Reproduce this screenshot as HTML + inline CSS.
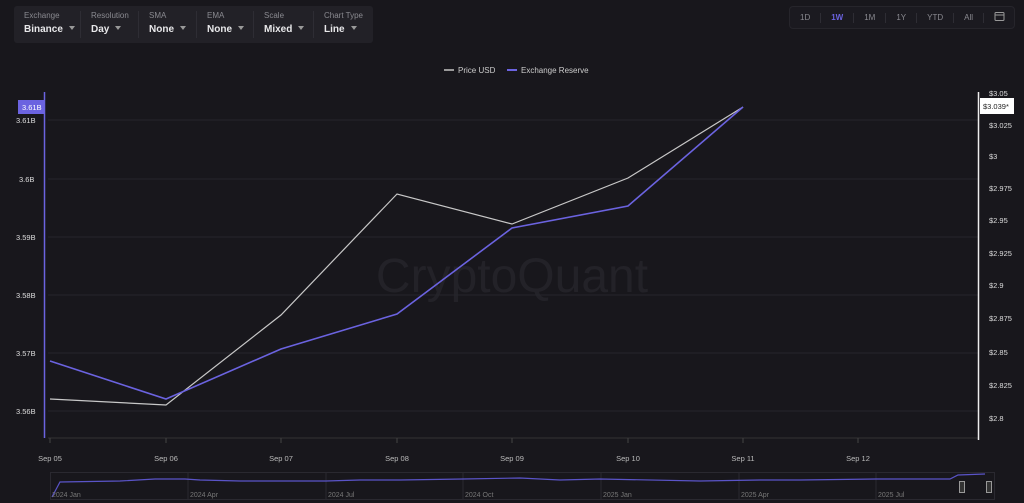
<!DOCTYPE html>
<html><head><meta charset="utf-8"><style>
*{margin:0;padding:0;box-sizing:border-box}
body{width:1024px;height:503px;background:#18171c;font-family:"Liberation Sans",sans-serif;overflow:hidden;position:relative;color:#ddd}
.tb{position:absolute;left:14px;top:6px;width:359px;height:37px;background:#222127;border-radius:3px;display:flex}
.tb .c{padding-left:10px;border-right:1px solid #2e2d34;height:27px;margin-top:5px;white-space:nowrap}
.tb .c:last-child{border:none}
.tb .l{display:block;font-size:8px;color:#8a8a90;line-height:10px}
.tb .v{display:block;font-size:10px;color:#e8e8ea;font-weight:bold;line-height:12px;margin-top:3px}
.tb .v:after{content:"";display:inline-block;border:3.5px solid transparent;border-top:4px solid #999;margin-left:6px;vertical-align:-1px}
.tr{position:absolute;left:789px;top:6px;width:226px;height:23px;border:1px solid #26252b;border-radius:4px;background:#1b1a20;display:flex;align-items:center;font-size:8px;color:#8a8a90}
.tr span{padding:0 10px;border-right:1px solid #2e2d34;line-height:10px}
.tr span:last-child{border:none}
svg text{font-family:"Liberation Sans",sans-serif}
</style></head><body>
<div class="tb">
<div class="c" style="width:67px"><span class="l">Exchange</span><span class="v">Binance</span></div>
<div class="c" style="width:58px"><span class="l">Resolution</span><span class="v">Day</span></div>
<div class="c" style="width:58px"><span class="l">SMA</span><span class="v">None</span></div>
<div class="c" style="width:57px"><span class="l">EMA</span><span class="v">None</span></div>
<div class="c" style="width:60px"><span class="l">Scale</span><span class="v">Mixed</span></div>
<div class="c" style="width:59px"><span class="l">Chart Type</span><span class="v">Line</span></div>
</div>
<div class="tr"><span>1D</span><span style="color:#6b63e0;font-weight:bold">1W</span><span>1M</span><span>1Y</span><span>YTD</span><span>All</span><span><svg width="11" height="10" viewBox="0 0 11 10"><rect x="1" y="1.5" width="9" height="8" rx="1" fill="none" stroke="#999"/><line x1="1" y1="4" x2="10" y2="4" stroke="#999"/></svg></span></div>
<svg width="1024" height="503" style="position:absolute;left:0;top:0">
<g font-size="8" fill="#ccc">
<line x1="444" y1="70" x2="454" y2="70" stroke="#999" stroke-width="2"/><text x="458" y="73">Price USD</text>
<line x1="507" y1="70" x2="517" y2="70" stroke="#6b63e0" stroke-width="2"/><text x="521" y="73">Exchange Reserve</text>
</g>
<text x="512" y="292" font-size="48" fill="#232228" text-anchor="middle">CryptoQuant</text>
<g stroke="#26252b" stroke-width="1">
<line x1="48" y1="120" x2="978" y2="120"/><line x1="48" y1="179" x2="978" y2="179"/><line x1="48" y1="237" x2="978" y2="237"/><line x1="48" y1="295" x2="978" y2="295"/><line x1="48" y1="353" x2="978" y2="353"/><line x1="48" y1="411" x2="978" y2="411"/>
<line x1="48" y1="438" x2="978" y2="438" stroke="#333"/>
</g>
<g stroke="#444"><line x1="50" y1="438" x2="50" y2="443"/><line x1="166" y1="438" x2="166" y2="443"/><line x1="281" y1="438" x2="281" y2="443"/><line x1="397" y1="438" x2="397" y2="443"/><line x1="512" y1="438" x2="512" y2="443"/><line x1="628" y1="438" x2="628" y2="443"/><line x1="743" y1="438" x2="743" y2="443"/><line x1="858" y1="438" x2="858" y2="443"/></g>
<g font-size="7.5" fill="#bbb" text-anchor="middle"><text x="50" y="461">Sep 05</text><text x="166" y="461">Sep 06</text><text x="281" y="461">Sep 07</text><text x="397" y="461">Sep 08</text><text x="512" y="461">Sep 09</text><text x="628" y="461">Sep 10</text><text x="743" y="461">Sep 11</text><text x="858" y="461">Sep 12</text></g>
<line x1="44.5" y1="92" x2="44.5" y2="438" stroke="#6b63e0" stroke-width="1.5"/>
<line x1="978.5" y1="92" x2="978.5" y2="440" stroke="#eee" stroke-width="1.5"/>
<g font-size="7.5" fill="#ddd"><text x="16" y="123">3.61B</text><text x="19" y="182">3.6B</text><text x="16" y="240">3.59B</text><text x="16" y="298">3.58B</text><text x="16" y="356">3.57B</text><text x="16" y="414">3.56B</text></g>
<rect x="18" y="100" width="26" height="14" fill="#6b63e0"/><text x="22" y="110" font-size="7.5" fill="#fff">3.61B</text>
<g font-size="7.5" fill="#ddd"><text x="989" y="96">$3.05</text><text x="989" y="128">$3.025</text><text x="989" y="159">$3</text><text x="989" y="191">$2.975</text><text x="989" y="223">$2.95</text><text x="989" y="256">$2.925</text><text x="989" y="288">$2.9</text><text x="989" y="321">$2.875</text><text x="989" y="355">$2.85</text><text x="989" y="388">$2.825</text><text x="989" y="421">$2.8</text></g>
<rect x="980" y="98" width="34" height="16" fill="#fff"/><text x="983" y="109" font-size="7.5" fill="#222">$3.039*</text>
<polyline points="50,399 166,405 281,315 397,194 512,224 628,178 743,107" fill="none" stroke="#c8c8c8" stroke-width="1.2"/>
<polyline points="50,361 166,399 281,349 397,314 512,228 628,206 743,107" fill="none" stroke="#6b63e0" stroke-width="1.6"/>
<rect x="50.5" y="472.5" width="944" height="27" fill="none" stroke="#2a2930"/>
<g stroke="#2a2930"><line x1="188" y1="473" x2="188" y2="499"/><line x1="326" y1="473" x2="326" y2="499"/><line x1="463" y1="473" x2="463" y2="499"/><line x1="601" y1="473" x2="601" y2="499"/><line x1="739" y1="473" x2="739" y2="499"/><line x1="876" y1="473" x2="876" y2="499"/></g>
<polyline points="52,497 60,482 120,481 155,479 185,479 200,480 240,481 326,481 360,480 400,480 463,479 520,478 560,480 600,479 700,481 760,480 800,480 876,479 950,479 958,475 985,474" fill="none" stroke="#5a54c8" stroke-width="1.2"/>
<g font-size="7" fill="#777"><text x="52" y="497">2024 Jan</text><text x="190" y="497">2024 Apr</text><text x="328" y="497">2024 Jul</text><text x="465" y="497">2024 Oct</text><text x="603" y="497">2025 Jan</text><text x="741" y="497">2025 Apr</text><text x="878" y="497">2025 Jul</text></g>
<rect x="959.5" y="481.5" width="5" height="11" fill="#333" stroke="#999"/><rect x="986.5" y="481.5" width="5" height="11" fill="#333" stroke="#999"/>
</svg>
</body></html>
